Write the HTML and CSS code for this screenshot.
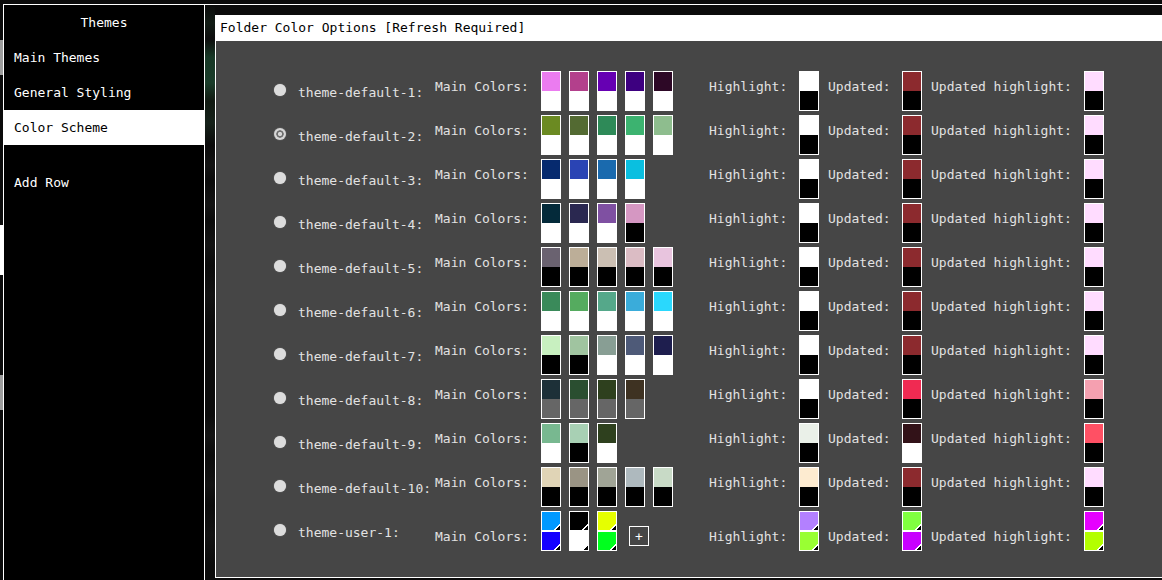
FILE: index.html
```html
<!DOCTYPE html>
<html>
<head>
<meta charset="utf-8">
<title>Folder Color Options</title>
<link rel="stylesheet" href="styles.css">
</head>
<body>
<div class="edge">
  <span class="edge-gap g1"></span>
  <span class="edge-bit grey"></span>
  <span class="edge-gap g2"></span>
  <span class="edge-bit white"></span>
  <span class="edge-gap g3"></span>
  <span class="edge-bit grey"></span>
</div>
<div class="frame">
  <nav class="sidebar">
    <div class="side-title">Themes</div>
    <div class="side-item">Main Themes</div>
    <div class="side-item">General Styling</div>
    <div class="side-item active">Color Scheme</div>
    <div class="side-spacer"></div>
    <div class="side-item">Add Row</div>
  </nav>
  <div class="gutter"></div>
  <section class="panel">
    <header class="panel-head">Folder Color Options [Refresh Required]</header>
    <div class="panel-body">

      <div class="row">
        <span class="radio"></span>
        <span class="name">theme-default-1:</span>
        <span class="lbl">Main Colors:</span>
        <div class="swatches">
          <div class="sw"><i style="background:#eb7cf0"></i><i style="background:#fff"></i></div>
          <div class="sw"><i style="background:#b3408c"></i><i style="background:#fff"></i></div>
          <div class="sw"><i style="background:#6600b3"></i><i style="background:#fff"></i></div>
          <div class="sw"><i style="background:#3d0080"></i><i style="background:#fff"></i></div>
          <div class="sw"><i style="background:#2d0826"></i><i style="background:#fff"></i></div>
        </div>
        <span class="lbl">Highlight:</span>
        <div class="sw"><i style="background:#fff"></i><i style="background:#000"></i></div>
        <span class="lbl">Updated:</span>
        <div class="sw"><i style="background:#8c2a2e"></i><i style="background:#000"></i></div>
        <span class="lbl">Updated highlight:</span>
        <div class="sw"><i style="background:#ffdcff"></i><i style="background:#000"></i></div>
      </div>

      <div class="row">
        <span class="radio checked"></span>
        <span class="name">theme-default-2:</span>
        <span class="lbl">Main Colors:</span>
        <div class="swatches">
          <div class="sw"><i style="background:#6b8a22"></i><i style="background:#fff"></i></div>
          <div class="sw"><i style="background:#536a32"></i><i style="background:#fff"></i></div>
          <div class="sw"><i style="background:#2e8a58"></i><i style="background:#fff"></i></div>
          <div class="sw"><i style="background:#3cb370"></i><i style="background:#fff"></i></div>
          <div class="sw"><i style="background:#8ebd8e"></i><i style="background:#fff"></i></div>
        </div>
        <span class="lbl">Highlight:</span>
        <div class="sw"><i style="background:#fff"></i><i style="background:#000"></i></div>
        <span class="lbl">Updated:</span>
        <div class="sw"><i style="background:#8c2a2e"></i><i style="background:#000"></i></div>
        <span class="lbl">Updated highlight:</span>
        <div class="sw"><i style="background:#ffdcff"></i><i style="background:#000"></i></div>
      </div>

      <div class="row">
        <span class="radio"></span>
        <span class="name">theme-default-3:</span>
        <span class="lbl">Main Colors:</span>
        <div class="swatches">
          <div class="sw"><i style="background:#062a6e"></i><i style="background:#fff"></i></div>
          <div class="sw"><i style="background:#2a44b4"></i><i style="background:#fff"></i></div>
          <div class="sw"><i style="background:#1a6aae"></i><i style="background:#fff"></i></div>
          <div class="sw"><i style="background:#0abfe0"></i><i style="background:#fff"></i></div>
        </div>
        <span class="lbl">Highlight:</span>
        <div class="sw"><i style="background:#fff"></i><i style="background:#000"></i></div>
        <span class="lbl">Updated:</span>
        <div class="sw"><i style="background:#8c2a2e"></i><i style="background:#000"></i></div>
        <span class="lbl">Updated highlight:</span>
        <div class="sw"><i style="background:#ffdcff"></i><i style="background:#000"></i></div>
      </div>

      <div class="row">
        <span class="radio"></span>
        <span class="name">theme-default-4:</span>
        <span class="lbl">Main Colors:</span>
        <div class="swatches">
          <div class="sw"><i style="background:#042a3a"></i><i style="background:#fff"></i></div>
          <div class="sw"><i style="background:#2a2850"></i><i style="background:#fff"></i></div>
          <div class="sw"><i style="background:#7f50a2"></i><i style="background:#fff"></i></div>
          <div class="sw"><i style="background:#d597c2"></i><i style="background:#000"></i></div>
        </div>
        <span class="lbl">Highlight:</span>
        <div class="sw"><i style="background:#fff"></i><i style="background:#000"></i></div>
        <span class="lbl">Updated:</span>
        <div class="sw"><i style="background:#8c2a2e"></i><i style="background:#000"></i></div>
        <span class="lbl">Updated highlight:</span>
        <div class="sw"><i style="background:#ffdcff"></i><i style="background:#000"></i></div>
      </div>

      <div class="row">
        <span class="radio"></span>
        <span class="name">theme-default-5:</span>
        <span class="lbl">Main Colors:</span>
        <div class="swatches">
          <div class="sw"><i style="background:#6a6270"></i><i style="background:#000"></i></div>
          <div class="sw"><i style="background:#bcae98"></i><i style="background:#000"></i></div>
          <div class="sw"><i style="background:#cbbfb3"></i><i style="background:#000"></i></div>
          <div class="sw"><i style="background:#dbbcc4"></i><i style="background:#000"></i></div>
          <div class="sw"><i style="background:#e8c4de"></i><i style="background:#000"></i></div>
        </div>
        <span class="lbl">Highlight:</span>
        <div class="sw"><i style="background:#fff"></i><i style="background:#000"></i></div>
        <span class="lbl">Updated:</span>
        <div class="sw"><i style="background:#8c2a2e"></i><i style="background:#000"></i></div>
        <span class="lbl">Updated highlight:</span>
        <div class="sw"><i style="background:#ffdcff"></i><i style="background:#000"></i></div>
      </div>

      <div class="row">
        <span class="radio"></span>
        <span class="name">theme-default-6:</span>
        <span class="lbl">Main Colors:</span>
        <div class="swatches">
          <div class="sw"><i style="background:#3a8a5a"></i><i style="background:#fff"></i></div>
          <div class="sw"><i style="background:#55ab5f"></i><i style="background:#fff"></i></div>
          <div class="sw"><i style="background:#55a88a"></i><i style="background:#fff"></i></div>
          <div class="sw"><i style="background:#3aacda"></i><i style="background:#fff"></i></div>
          <div class="sw"><i style="background:#2ad8fd"></i><i style="background:#fff"></i></div>
        </div>
        <span class="lbl">Highlight:</span>
        <div class="sw"><i style="background:#fff"></i><i style="background:#000"></i></div>
        <span class="lbl">Updated:</span>
        <div class="sw"><i style="background:#8c2a2e"></i><i style="background:#000"></i></div>
        <span class="lbl">Updated highlight:</span>
        <div class="sw"><i style="background:#ffdcff"></i><i style="background:#000"></i></div>
      </div>

      <div class="row">
        <span class="radio"></span>
        <span class="name">theme-default-7:</span>
        <span class="lbl">Main Colors:</span>
        <div class="swatches">
          <div class="sw"><i style="background:#c8f0c0"></i><i style="background:#000"></i></div>
          <div class="sw"><i style="background:#a0c4a0"></i><i style="background:#000"></i></div>
          <div class="sw"><i style="background:#889e94"></i><i style="background:#fff"></i></div>
          <div class="sw"><i style="background:#4e5a78"></i><i style="background:#fff"></i></div>
          <div class="sw"><i style="background:#1e1e4e"></i><i style="background:#fff"></i></div>
        </div>
        <span class="lbl">Highlight:</span>
        <div class="sw"><i style="background:#fff"></i><i style="background:#000"></i></div>
        <span class="lbl">Updated:</span>
        <div class="sw"><i style="background:#8c2a2e"></i><i style="background:#000"></i></div>
        <span class="lbl">Updated highlight:</span>
        <div class="sw"><i style="background:#ffdcff"></i><i style="background:#000"></i></div>
      </div>

      <div class="row">
        <span class="radio"></span>
        <span class="name">theme-default-8:</span>
        <span class="lbl">Main Colors:</span>
        <div class="swatches">
          <div class="sw"><i style="background:#1d3038"></i><i style="background:#666"></i></div>
          <div class="sw"><i style="background:#2a4e30"></i><i style="background:#666"></i></div>
          <div class="sw"><i style="background:#2e401e"></i><i style="background:#666"></i></div>
          <div class="sw"><i style="background:#3e3222"></i><i style="background:#666"></i></div>
        </div>
        <span class="lbl">Highlight:</span>
        <div class="sw"><i style="background:#fff"></i><i style="background:#000"></i></div>
        <span class="lbl">Updated:</span>
        <div class="sw"><i style="background:#f02a52"></i><i style="background:#000"></i></div>
        <span class="lbl">Updated highlight:</span>
        <div class="sw"><i style="background:#f5a0b0"></i><i style="background:#000"></i></div>
      </div>

      <div class="row">
        <span class="radio"></span>
        <span class="name">theme-default-9:</span>
        <span class="lbl">Main Colors:</span>
        <div class="swatches">
          <div class="sw"><i style="background:#78b890"></i><i style="background:#fff"></i></div>
          <div class="sw"><i style="background:#a8d0b4"></i><i style="background:#000"></i></div>
          <div class="sw"><i style="background:#2e401e"></i><i style="background:#fff"></i></div>
        </div>
        <span class="lbl">Highlight:</span>
        <div class="sw"><i style="background:#eaf0e8"></i><i style="background:#000"></i></div>
        <span class="lbl">Updated:</span>
        <div class="sw"><i style="background:#321218"></i><i style="background:#fff"></i></div>
        <span class="lbl">Updated highlight:</span>
        <div class="sw"><i style="background:#ff5064"></i><i style="background:#000"></i></div>
      </div>

      <div class="row">
        <span class="radio"></span>
        <span class="name">theme-default-10:</span>
        <span class="lbl">Main Colors:</span>
        <div class="swatches">
          <div class="sw"><i style="background:#e0d4b6"></i><i style="background:#000"></i></div>
          <div class="sw"><i style="background:#9a9484"></i><i style="background:#000"></i></div>
          <div class="sw"><i style="background:#a0a496"></i><i style="background:#000"></i></div>
          <div class="sw"><i style="background:#aeb9be"></i><i style="background:#000"></i></div>
          <div class="sw"><i style="background:#c8dac6"></i><i style="background:#000"></i></div>
        </div>
        <span class="lbl">Highlight:</span>
        <div class="sw"><i style="background:#fdebd0"></i><i style="background:#000"></i></div>
        <span class="lbl">Updated:</span>
        <div class="sw"><i style="background:#8c2a2e"></i><i style="background:#000"></i></div>
        <span class="lbl">Updated highlight:</span>
        <div class="sw"><i style="background:#ffdcff"></i><i style="background:#000"></i></div>
      </div>

      <div class="row user">
        <span class="radio"></span>
        <span class="name">theme-user-1:</span>
        <span class="lbl">Main Colors:</span>
        <div class="swatches">
          <div class="usw"><b style="background:#0099ff"></b><b style="background:#1400ff"></b></div>
          <div class="usw"><b style="background:#000"></b><b style="background:#fff"></b></div>
          <div class="usw"><b style="background:#e6ff00"></b><b style="background:#00ff1e"></b></div>
          <span class="add">+</span>
        </div>
        <span class="lbl">Highlight:</span>
        <div class="usw"><b style="background:#b380ff"></b><b style="background:#99ff33"></b></div>
        <span class="lbl">Updated:</span>
        <div class="usw"><b style="background:#80ff40"></b><b style="background:#c800ff"></b></div>
        <span class="lbl">Updated highlight:</span>
        <div class="usw"><b style="background:#e600ff"></b><b style="background:#b3ff00"></b></div>
      </div>

    </div>
  </section>
</div>
</body>
</html>
```

FILE: styles.css
```css
* { box-sizing: border-box; }

html, body {
  margin: 0;
  padding: 0;
  height: 580px;
  overflow: hidden;
}

body {
  background: #0b0b0b;
  display: flex;
  font-family: "DejaVu Sans Mono", "Liberation Mono", monospace;
  font-size: 13px;
  color: #e2e2e2;
}

/* left edge fragments */
.edge {
  width: 3px;
  flex: none;
  display: flex;
  flex-direction: column;
}
.edge-gap.g1 { height: 40px; }
.edge-gap.g2 { height: 150px; }
.edge-gap.g3 { height: 100px; }
.edge-bit.grey { height: 35px; background: #9d9d9d; }
.edge-bit.white { height: 50px; background: #fff; }

.frame {
  flex: 1;
  margin-top: 4px;
  height: 576px;
  border-top: 1px solid #fff;
  border-left: 1px solid #fff;
  display: flex;
}

/* sidebar */
.sidebar {
  width: 201px;
  flex: none;
  background: #000;
  border-right: 1px solid #fff;
  color: #fff;
}
.side-title {
  height: 35px;
  line-height: 35px;
  text-align: center;
}
.side-item {
  height: 35px;
  line-height: 35px;
  padding-left: 10px;
}
.side-item.active {
  background: #fff;
  color: #000;
}
.side-spacer { height: 20px; }

.gutter {
  width: 10px;
  flex: none;
  background: linear-gradient(to bottom,
    #0b0b0b 0px, #121c15 18px, #0d0d0d 34px, #173826 52px, #1a3d2a 78px,
    #111a12 96px, #16221a 118px, #0b0b0b 140px, #131313 160px, #0b0b0b 175px,
    #141414 200px, #0b0b0b 215px, #131313 240px, #0b0b0b 260px, #121212 290px,
    #0b0b0b 320px, #0b0b0b 410px, #141414 430px, #0b0b0b 450px, #131313 480px,
    #0b0b0b 500px, #131313 530px, #0b0b0b 560px);
}

/* panel */
.panel {
  flex: 1;
  margin-top: 10px;
  height: 563px;
  border-left: 1px solid #fff;
  border-bottom: 1px solid #fff;
  display: flex;
  flex-direction: column;
  min-width: 0;
}
.panel-head {
  height: 26px;
  line-height: 25px;
  padding-left: 4px;
  background: #fff;
  color: #000;
  white-space: nowrap;
}
.panel-body {
  flex: 1;
  background: #464646;
  padding: 30px 0 0 58px;
}

.row {
  display: grid;
  grid-template-columns: 24px 137px 106px 168px 90px 29px 74px 29px 153px 20px;
  height: 40px;
  margin-bottom: 4px;
  align-items: center;
}
.row.user { margin-top: 1px; }

.radio {
  width: 12px;
  height: 12px;
  margin-bottom: 2px;
  border-radius: 50%;
  background: #dcdcdc;
  box-shadow: 0 0 1px 0 rgba(220, 220, 220, 0.8);
}
.radio.checked {
  background: radial-gradient(circle, #d6d6d6 0 1.8px, #6e6e6e 2.4px 3.4px, #d6d6d6 4px);
}

.name {
  line-height: 15px;
  margin-top: 2px;
  white-space: nowrap;
}
.lbl {
  align-self: start;
  margin-top: 8px;
  line-height: 15px;
  white-space: nowrap;
}
.row.user .lbl { margin-top: 18px; }

.swatches {
  display: flex;
  gap: 8px;
  align-items: center;
  height: 40px;
}

.sw {
  width: 20px;
  height: 40px;
  border: 1px solid #fff;
  display: flex;
  flex-direction: column;
}
.sw i { flex: 1; display: block; }

.usw {
  width: 20px;
  height: 40px;
  display: flex;
  flex-direction: column;
}
.usw b {
  position: relative;
  display: block;
  height: 20px;
  border: 1px solid #fff;
}
.usw b::after {
  content: "";
  position: absolute;
  right: 0;
  bottom: 0;
  width: 7px;
  height: 7px;
  background: linear-gradient(to bottom right, transparent 54%, #fff 54%, #fff 66%, #000 66%);
}

.add {
  width: 20px;
  height: 20px;
  border: 1px solid #fff;
  color: #fff;
  display: flex;
  align-items: center;
  justify-content: center;
  line-height: 1;
  margin-left: 4px;
  margin-top: 10px;
}
```
